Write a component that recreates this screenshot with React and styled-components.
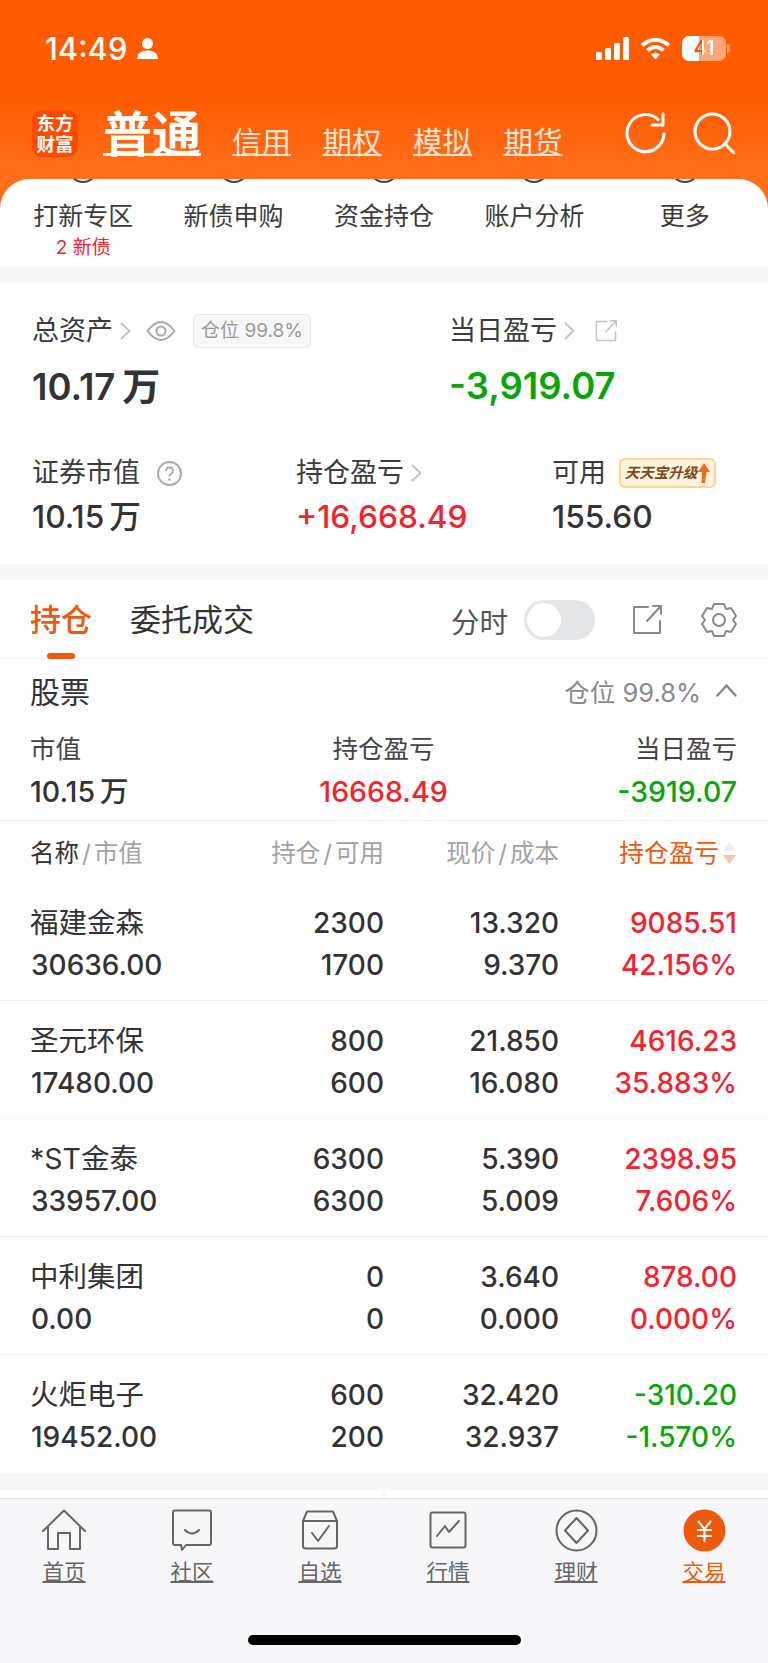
import React from "react";
import styled, { createGlobalStyle } from "styled-components";

const FONT = `Inter, "Noto Sans CJK SC", sans-serif`;
const RED = "#f5222d";
const GREEN = "#0aa50a";
const ORANGE = "#ee5a0c";
const DARK = "#333";

const GlobalStyle = createGlobalStyle`
  html, body { margin: 0; padding: 0; background: #f6f7f9; }
  body { font-family: ${FONT}; color: ${DARK}; }
`;

const Page = styled.div`
  width: 768px;
  height: 1663px;
  overflow: hidden;
  display: flex;
  flex-direction: column;
  background: #f6f7f9;
`;

// header
const Header = styled.div`
  background: linear-gradient(180deg, #ff5a00 0%, #ff5c02 37%, #ff701c 67%);
  height: 267px;
  box-sizing: border-box;
`;

const StatusBar = styled.div`
  height: 96px;
  box-sizing: border-box;
  display: flex;
  align-items: center;
  padding: 0 42px 0 45px;
  color: #fff;
`;

const Clock = styled.span`
  font-size: 31px;
  font-weight: 500;
  margin-right: 10px;
`;

const StatusRight = styled.div`
  margin-left: auto;
  display: flex;
  align-items: center;
  gap: 11px;
`;

const Battery = styled.div`
  position: relative;
  width: 44px;
  height: 25px;
  border-radius: 7px;
  background: linear-gradient(90deg, #fff 0 17px, rgba(255, 255, 255, 0.45) 17px);
  font-size: 20px;
  font-weight: 600;
  line-height: 25px;
  text-align: center;
  &::after {
    content: "";
    position: absolute;
    right: -4px;
    top: 8px;
    width: 3px;
    height: 9px;
    border-radius: 0 3px 3px 0;
    background: rgba(255, 255, 255, 0.45);
  }
`;

const BatteryText = styled.span`
  background: linear-gradient(90deg, ${ORANGE} 0 9px, #fff 9px);
  -webkit-background-clip: text;
  background-clip: text;
  color: transparent;
`;

const TopTabs = styled.div`
  height: 83px;
  box-sizing: border-box;
  display: flex;
  align-items: flex-start;
  padding: 14px 32px 0;
  color: #fff;
`;

const Logo = styled.div`
  width: 46px;
  height: 47px;
  border-radius: 10px;
  background: #ff4a00;
  font-size: 18.5px;
  line-height: 21px;
  font-weight: 700;
  text-align: center;
  padding-top: 3px;
  box-sizing: border-box;
  margin-right: 25px;
  flex: none;
`;

const MainTab = styled.span`
  font-size: 49px;
  line-height: 50px;
  font-weight: 700;
  text-decoration: underline;
  text-decoration-thickness: 3px;
  text-underline-offset: 1px;
  margin-right: 31px;
`;

const SubTab = styled.span`
  font-size: 29.5px;
  line-height: 34px;
  color: #ffe3d2;
  text-decoration: underline;
  text-decoration-thickness: 2px;
  margin-top: 15px;
  margin-right: 31.5px;
`;

const HeaderIcons = styled.div`
  margin-left: auto;
  display: flex;
  gap: 27px;
  margin-right: 1px;
  margin-top: 2px;
`;

const ShortcutCard = styled.div`
  background: #fff;
  border-radius: 30px 30px 0 0;
  height: 88px;
  overflow: hidden;
  padding: 0 8px;
  display: grid;
  grid-template-columns: repeat(5, 1fr);
`;

const Shortcut = styled.div`
  display: flex;
  flex-direction: column;
  align-items: center;
`;

const ShortcutPeek = styled.div`
  width: 30px;
  height: 30px;
  margin-top: -26px;
  border: 2px solid #444;
  border-radius: 50%;
  box-sizing: border-box;
`;

const ShortcutLabel = styled.div`
  font-size: 25px;
  line-height: 32px;
  margin-top: 17px;
  color: #3c3c3c;
`;

const ShortcutNote = styled.div`
  font-size: 19px;
  line-height: 22px;
  margin-top: 5px;
  color: ${RED};
`;

// assets
const AssetCard = styled.div`
  margin-top: 16px;
  height: 281px;
  background: #fff;
  padding: 30px 0 0 32px;
  box-sizing: border-box;
`;

const AssetRow = styled.div`
  display: grid;
  grid-template-columns: ${(p) => p.$cols};
  margin-top: ${(p) => p.$top || 0}px;
`;

const Label = styled.div`
  display: flex;
  align-items: center;
  font-size: 27px;
  line-height: 36px;
  color: #3c3c3c;
`;

const PosBadge = styled.span`
  margin-left: 17px;
  width: 118px;
  height: 34px;
  box-sizing: border-box;
  border: 1px solid #e8e8ea;
  border-radius: 5px;
  background: #f7f7f8;
  font-size: 19px;
  line-height: 32px;
  color: #9a9a9a;
  text-align: center;
  white-space: nowrap;
`;

const BigValue = styled.div`
  font-size: 36.5px;
  line-height: 44px;
  font-weight: 600;
  margin-top: 15px;
  color: ${(p) => p.$color || DARK};
`;

const MidValue = styled.div`
  font-size: 31.7px;
  line-height: 40px;
  font-weight: 500;
  margin-top: 6px;
  color: ${(p) => p.$color || DARK};
`;

const Unit = styled.span`
  margin-left: 5px;
`;

const BigUnit = styled.span`
  margin-left: 7px;
  font-size: 38px;
`;

const UpgradeBadge = styled.span`
  margin-left: 13px;
  width: 97px;
  height: 30px;
  box-sizing: border-box;
  display: flex;
  align-items: center;
  justify-content: center;
  gap: 1px;
  border: 2px solid #fcd98a;
  border-radius: 6px;
  background: #fff3dc;
  font-size: 14.5px;
  font-weight: 700;
  font-style: italic;
  color: #7a4a24;
  white-space: nowrap;
`;

// holdings
const Holdings = styled.div`
  margin-top: 16px;
  background: #fff;
`;

const TabBar = styled.div`
  height: 79px;
  box-sizing: border-box;
  display: flex;
  align-items: center;
  padding: 2px 31px 0 30px;
  border-bottom: 1px solid #f2f2f4;
`;

const Tab = styled.div`
  position: relative;
  font-size: 31px;
  line-height: 40px;
  margin-right: 38px;
  color: ${(p) => (p.$active ? ORANGE : DARK)};
  font-weight: ${(p) => (p.$active ? 500 : 400)};
  &::after {
    content: "";
    display: ${(p) => (p.$active ? "block" : "none")};
    position: absolute;
    left: 17px;
    top: 53px;
    width: 28px;
    height: 6px;
    border-radius: 3px;
    background: ${ORANGE};
  }
`;

const TabTools = styled.div`
  margin-left: auto;
  display: flex;
  align-items: center;
  color: #666;
`;

const ToolText = styled.span`
  font-size: 28.5px;
  margin-right: 16px;
  color: #555;
`;

const Toggle = styled.div`
  width: 71px;
  height: 40px;
  border-radius: 20px;
  background: #e4e5e7;
  padding: 3px;
  box-sizing: border-box;
  margin-right: 37px;
  &::before {
    content: "";
    display: block;
    width: 34px;
    height: 34px;
    border-radius: 50%;
    background: #fff;
  }
`;

const StockHead = styled.div`
  height: 162px;
  box-sizing: border-box;
  padding: 11px 31px 0 30px;
  border-bottom: 1px solid #f0f0f2;
`;

const TitleRow = styled.div`
  display: flex;
  align-items: center;
  justify-content: space-between;
  height: 40px;
`;

const Title = styled.span`
  font-size: 30px;
`;

const PosText = styled.span`
  display: flex;
  align-items: center;
  gap: 15px;
  font-size: 25.5px;
  color: #8a8a8a;
`;

const SummaryGrid = styled.div`
  display: grid;
  grid-template-columns: 1fr 1fr 1fr;
  margin-top: 22px;
`;

const SummaryCell = styled.div`
  text-align: ${(p) => p.$align};
`;

const SummaryLabel = styled.div`
  font-size: 25.5px;
  line-height: 34px;
  color: #444;
`;

const SummaryValue = styled.div`
  font-size: 28.5px;
  line-height: 36px;
  font-weight: 500;
  margin-top: 8px;
  color: ${(p) => p.$color || DARK};
`;

const COLUMNS = "1fr 132px 175px 178px";

const TableHead = styled.div`
  height: 62px;
  box-sizing: border-box;
  padding: 12px 31px 0 30px;
  display: grid;
  grid-template-columns: 222px 132px 175px 178px;
  grid-template-rows: 40px;
  font-size: 24.5px;
  line-height: 40px;
  color: #a3a3a3;
`;

const HeadCell = styled.div`
  text-align: ${(p) => (p.$left ? "left" : "right")};
  white-space: nowrap;
`;

const HeadStrong = styled.span`
  color: ${DARK};
`;

const Slash = styled.span`
  margin: 0 3px;
`;

const SortHead = styled.div`
  display: flex;
  justify-content: flex-end;
  align-items: center;
  gap: 3px;
  font-size: 25px;
  color: ${ORANGE};
  white-space: nowrap;
`;

const Row = styled.div`
  height: 118px;
  box-sizing: border-box;
  padding: 19px 31px 0;
  display: grid;
  grid-template-columns: ${COLUMNS};
  grid-template-rows: 42px 42px;
  font-size: 28px;
  line-height: 42px;
  font-weight: 500;
  color: ${DARK};
  border-bottom: ${(p) => (p.$last ? "none" : "1px solid #f0f0f2")};
`;

const Cell = styled.div`
  text-align: right;
  color: ${(p) => p.$color || "inherit"};
`;

const NameCell = styled.div`
  font-weight: 400;
  font-size: 28.5px;
  margin-left: -1px;
  white-space: nowrap;
`;

const ValueCell = styled.div`
  white-space: nowrap;
`;

const Peek = styled.div`
  margin-top: 17px;
  height: 8px;
  display: grid;
  grid-template-columns: 382px 1fr;
  gap: 4px;
`;

const PeekCell = styled.div`
  background: #fff;
`;

// bottom navigation
const Nav = styled.nav`
  flex: 1;
  background: #f7f7f9;
  border-top: 1px solid #dfdfe2;
  display: flex;
  flex-direction: column;
`;

const NavItems = styled.div`
  display: grid;
  grid-template-columns: repeat(6, 128px);
  padding-top: 9px;
`;

const NavItem = styled.div`
  display: flex;
  flex-direction: column;
  align-items: center;
  color: ${(p) => (p.$active ? ORANGE : "#666")};
`;

const NavIconBox = styled.div`
  height: 44px;
  display: flex;
  align-items: center;
  justify-content: center;
`;

const NavLabel = styled.span`
  font-size: 21.5px;
  line-height: 30px;
  margin-top: 5px;
  text-decoration: underline;
  text-decoration-thickness: 1.5px;
`;

const HomeBar = styled.div`
  width: 273px;
  height: 10px;
  border-radius: 5px;
  background: #000;
  margin: 48px auto 0;
`;

const IconSlot = styled.span`
  display: inline-flex;
  margin-left: ${(p) => p.$ml}px;
`;

const Svg = ({ w, h, children, vb, color = "currentColor", sw = 2 }) => (
  <svg
    width={w}
    height={h}
    viewBox={vb || `0 0 ${w} ${h}`}
    fill="none"
    stroke={color}
    strokeWidth={sw}
    strokeLinecap="round"
    strokeLinejoin="round"
  >
    {children}
  </svg>
);

const Chevron = () => (
  <IconSlot $ml={7}>
    <Svg w={11} h={18} color="#c4c4c4">
      <path d="M1.5 1.5 L9.5 9 L1.5 16.5" />
    </Svg>
  </IconSlot>
);

const ShareIcon = ({ size = 30, color = "#888", sw = 2 }) => (
  <Svg w={size} h={size} vb="0 0 30 30" color={color} sw={sw}>
    <path d="M16 2 H2 V28 H28 V16" />
    <path d="M29 1 L15 16 M21 1 H29 V9" />
  </Svg>
);

const tabsRight = ["信用", "期权", "模拟", "期货"];
const shortcuts = [
  { label: "打新专区", note: "2 新债" },
  { label: "新债申购" },
  { label: "资金持仓" },
  { label: "账户分析" },
  { label: "更多" },
];

const holdings = [
  ["福建金森", "30636.00", "2300", "1700", "13.320", "9.370", "9085.51", "42.156%", RED],
  ["圣元环保", "17480.00", "800", "600", "21.850", "16.080", "4616.23", "35.883%", RED],
  ["*ST金泰", "33957.00", "6300", "6300", "5.390", "5.009", "2398.95", "7.606%", RED],
  ["中利集团", "0.00", "0", "0", "3.640", "0.000", "878.00", "0.000%", RED],
  ["火炬电子", "19452.00", "600", "200", "32.420", "32.937", "-310.20", "-1.570%", GREEN],
];

const navIcons = [
  <Svg key="home" w={46} h={42} sw={2}>
    <path d="M2 22 L23 1.5 L44 22 M7 18 V40 H17 V24 H29 V40 H39 V18" />
  </Svg>,
  <Svg key="chat" w={40} h={42} sw={2}>
    <path d="M3 1.5 H37 Q39 1.5 39 3.5 V34 Q39 36 37 36 H14 L10 41 L9 36 H3 Q1 36 1 34 V3.5 Q1 1.5 3 1.5 Z" />
    <path d="M13 21 Q20 28 27 21" />
  </Svg>,
  <Svg key="watch" w={38} h={40} sw={2}>
    <path d="M2 11 L6 1.5 H32 L36 11 V36 Q36 38.5 33 38.5 H5 Q2 38.5 2 36 Z M2 11 H36" />
    <path d="M11 23 L17 31 L28 16" />
  </Svg>,
  <Svg key="chart" w={38} h={38} sw={2}>
    <rect x="1.5" y="1.5" width="35" height="35" rx="2" />
    <path d="M8 25 L16 15 L20 21 L30 10" />
  </Svg>,
  <Svg key="wealth" w={43} h={43} sw={2}>
    <circle cx="21.5" cy="21.5" r="20" />
    <path d="M21.5 9 L33 21.5 L21.5 34 L10 21.5 Z" />
  </Svg>,
  <svg key="trade" width="43" height="43" viewBox="0 0 43 43">
    <circle cx="21.5" cy="21.5" r="21" fill="#ee5a0c" />
    <path
      d="M15 12 L21.5 20 L28 12 M14 21 H29 M14 27 H29 M21.5 20 V33"
      fill="none"
      stroke="#fff"
      strokeWidth="2"
    />
  </svg>,
];
const navLabels = ["首页", "社区", "自选", "行情", "理财", "交易"];

const App = () => (
  <Page>
    <GlobalStyle />
    <Header>
      <StatusBar>
        <Clock>14:49</Clock>
        <svg width="21" height="21" viewBox="0 0 21 21" fill="#fff">
          <circle cx="10.5" cy="5.5" r="5.5" />
          <path d="M0 21 Q0 12.5 10.5 12.5 Q21 12.5 21 21 Z" />
        </svg>
        <StatusRight>
          <svg width="33" height="23" viewBox="0 0 33 23" fill="#fff">
            <rect x="0" y="15" width="6" height="8" rx="1.5" />
            <rect x="9" y="11" width="6" height="12" rx="1.5" />
            <rect x="18" y="6" width="6" height="17" rx="1.5" />
            <rect x="27" y="0" width="6" height="23" rx="1.5" />
          </svg>
          <svg width="31" height="23" viewBox="0 0 31 23" fill="none" stroke="#fff" strokeWidth="4">
            <path d="M2 8.5 Q15.5 -3 29 8.5" />
            <path d="M7.5 13.5 Q15.5 6.5 23.5 13.5" />
            <path d="M15.5 22 L11.5 17.5 Q15.5 14.5 19.5 17.5 Z" fill="#fff" strokeWidth="1" />
          </svg>
          <Battery>
            <BatteryText>41</BatteryText>
          </Battery>
        </StatusRight>
      </StatusBar>
      <TopTabs>
        <Logo>
          东方
          <br />
          财富
        </Logo>
        <MainTab>普通</MainTab>
        {tabsRight.map((t) => (
          <SubTab key={t}>{t}</SubTab>
        ))}
        <HeaderIcons>
          <Svg w={41} h={42} color="#fff" sw={3}>
            <path d="M33 7.5 A18.5 18.5 0 1 0 39 22" />
            <path d="M38 2 V13 H27" />
          </Svg>
          <Svg w={42} h={42} color="#fff" sw={3}>
            <circle cx="19.5" cy="19.5" r="17.5" />
            <path d="M32 32 L41 41" />
          </Svg>
        </HeaderIcons>
      </TopTabs>
      <ShortcutCard>
        {shortcuts.map((s) => (
          <Shortcut key={s.label}>
            <ShortcutPeek />
            <ShortcutLabel>{s.label}</ShortcutLabel>
            {s.note && <ShortcutNote>{s.note}</ShortcutNote>}
          </Shortcut>
        ))}
      </ShortcutCard>
    </Header>

    <AssetCard>
      <AssetRow $cols="417px 1fr">
        <Label>
          总资产
          <Chevron />
          <IconSlot $ml={15}>
            <Svg w={30} h={22} color="#aaa" sw={2}>
              <path d="M1.5 11 Q15 -7 28.5 11 Q15 29 1.5 11 Z" />
              <circle cx="15" cy="11" r="4.5" />
            </Svg>
          </IconSlot>
          <PosBadge>仓位 99.8%</PosBadge>
        </Label>
        <Label>
          当日盈亏
          <Chevron />
          <IconSlot $ml={20}>
            <ShareIcon size={22} color="#c4c4c4" />
          </IconSlot>
        </Label>
      </AssetRow>
      <AssetRow $cols="417px 1fr">
        <BigValue>
          10.17<BigUnit>万</BigUnit>
        </BigValue>
        <BigValue $color={GREEN}>-3,919.07</BigValue>
      </AssetRow>
      <AssetRow $cols="264px 256px 1fr" $top={46}>
        <Label>
          证券市值
          <IconSlot $ml={17}>
            <svg width="25" height="25" viewBox="0 0 25 25">
              <circle cx="12.5" cy="12.5" r="11.5" fill="none" stroke="#aaa" strokeWidth="2" />
              <path
                d="M9 10 Q9 6.5 12.5 6.5 Q16 6.5 16 9.8 Q16 11.8 13.8 13 Q12.5 13.8 12.5 15.5"
                fill="none"
                stroke="#aaa"
                strokeWidth="1.8"
              />
              <circle cx="12.5" cy="18.5" r="1.2" fill="#aaa" />
            </svg>
          </IconSlot>
        </Label>
        <Label>
          持仓盈亏
          <Chevron />
        </Label>
        <Label>
          可用
          <UpgradeBadge>
            天天宝升级
            <svg width="12" height="20" viewBox="0 0 12 20">
              <path d="M6 0 L12 9 H8.5 L7 20 H3.5 L4 9 H0 Z" fill="#f4681f" />
            </svg>
          </UpgradeBadge>
        </Label>
      </AssetRow>
      <AssetRow $cols="264px 256px 1fr">
        <MidValue>
          10.15<Unit>万</Unit>
        </MidValue>
        <MidValue $color={RED}>+16,668.49</MidValue>
        <MidValue>155.60</MidValue>
      </AssetRow>
    </AssetCard>

    <Holdings>
      <TabBar>
        <Tab $active>持仓</Tab>
        <Tab>委托成交</Tab>
        <TabTools>
          <ToolText>分时</ToolText>
          <Toggle />
          <ShareIcon size={30} />
          <IconSlot $ml={39}>
            <Svg w={36} h={36} color="#888" sw={2}>
              <path d="M13 2 H23 L25 7 L30 6 L35 14 L32 18 L35 22 L30 30 L25 29 L23 34 H13 L11 29 L6 30 L1 22 L4 18 L1 14 L6 6 L11 7 Z" />
              <circle cx="18" cy="18" r="6" />
            </Svg>
          </IconSlot>
        </TabTools>
      </TabBar>

      <StockHead>
        <TitleRow>
          <Title>股票</Title>
          <PosText>
            仓位 99.8%
            <Svg w={21} h={13} color="#888" sw={2.4}>
              <path d="M1.5 11.5 L10.5 1.5 L19.5 11.5" />
            </Svg>
          </PosText>
        </TitleRow>
        <SummaryGrid>
          <SummaryCell $align="left">
            <SummaryLabel>市值</SummaryLabel>
            <SummaryValue>
              10.15<Unit>万</Unit>
            </SummaryValue>
          </SummaryCell>
          <SummaryCell $align="center">
            <SummaryLabel>持仓盈亏</SummaryLabel>
            <SummaryValue $color={RED}>16668.49</SummaryValue>
          </SummaryCell>
          <SummaryCell $align="right">
            <SummaryLabel>当日盈亏</SummaryLabel>
            <SummaryValue $color={GREEN}>-3919.07</SummaryValue>
          </SummaryCell>
        </SummaryGrid>
      </StockHead>

      <TableHead>
        <HeadCell $left>
          <HeadStrong>名称</HeadStrong>
          <Slash>/</Slash>市值
        </HeadCell>
        <HeadCell>
          持仓<Slash>/</Slash>可用
        </HeadCell>
        <HeadCell>
          现价<Slash>/</Slash>成本
        </HeadCell>
        <SortHead>
          持仓盈亏
          <svg width="15" height="24" viewBox="0 0 15 24">
            <path d="M7.5 1 L14 10 H1 Z" fill="#eeeeee" />
            <path d="M7.5 23 L14 14 H1 Z" fill="#fbc4a8" />
          </svg>
        </SortHead>
      </TableHead>

      {holdings.map((h, i) => (
        <Row key={h[0]} $last={i === holdings.length - 1}>
          <NameCell>{h[0]}</NameCell>
          <Cell>{h[2]}</Cell>
          <Cell>{h[4]}</Cell>
          <Cell $color={h[8]}>{h[6]}</Cell>
          <ValueCell>{h[1]}</ValueCell>
          <Cell>{h[3]}</Cell>
          <Cell>{h[5]}</Cell>
          <Cell $color={h[8]}>{h[7]}</Cell>
        </Row>
      ))}
    </Holdings>

    <Peek>
      <PeekCell />
      <PeekCell />
    </Peek>

    <Nav>
      <NavItems>
        {navLabels.map((label, i) => (
          <NavItem key={label} $active={i === 5}>
            <NavIconBox>{navIcons[i]}</NavIconBox>
            <NavLabel>{label}</NavLabel>
          </NavItem>
        ))}
      </NavItems>
      <HomeBar />
    </Nav>
  </Page>
);

export default App;
